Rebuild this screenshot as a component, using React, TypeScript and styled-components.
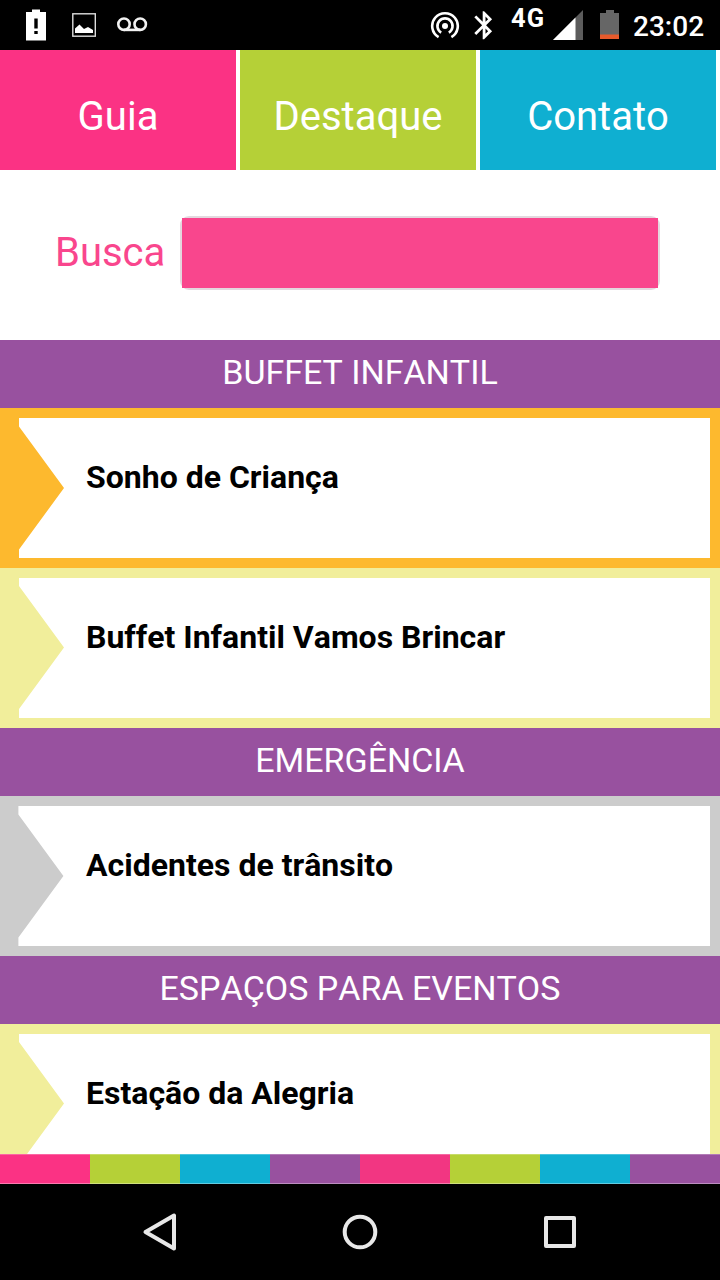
import React from "react";
import styled, { createGlobalStyle } from "styled-components";

const GlobalStyle = createGlobalStyle`
  * { box-sizing: border-box; }
  body {
    margin: 0;
    background: #fff;
    font-family: Roboto, "Liberation Sans", sans-serif;
    font-kerning: none;
  }
`;

const colors = {
  pink: "#fb3284",
  lime: "#b5d037",
  cyan: "#0fafd1",
  purple: "#98519f",
};

const Screen = styled.div`
  display: flex;
  flex-direction: column;
  width: 720px;
  height: 1280px;
  overflow: hidden;
  background: #fff;
`;

const StatusBar = styled.header`
  display: flex;
  justify-content: space-between;
  flex: none;
  height: 50px;
  padding: 0 15px 0 24px;
  background: #000;
  color: #fff;
`;

const StatusGroup = styled.div`
  display: flex;
  align-items: flex-start;
  height: 50px;
`;

const StatusIcon = styled.svg<{ $gap?: number }>`
  display: block;
  flex: none;
  margin-right: ${(p) => p.$gap ?? 0}px;
`;

const Network = styled.span`
  width: 38px;
  margin-top: 3px;
  font-size: 25.5px;
  font-weight: 700;
  line-height: 30px;
  letter-spacing: 1.2px;
`;

const Clock = styled.time`
  width: 72px;
  font-size: 28px;
  font-weight: 500;
  line-height: 53px;
  white-space: nowrap;
`;

const Tabs = styled.nav`
  display: grid;
  grid-template-columns: repeat(3, 236px);
  column-gap: 4px;
  flex: none;
  height: 120px;
`;

const Tab = styled.a<{ $color: string }>`
  display: flex;
  align-items: center;
  justify-content: center;
  padding-top: 12px;
  background: ${(p) => p.$color};
  color: #fff;
  font-size: 40px;
`;

const SearchRow = styled.label`
  display: flex;
  align-items: flex-start;
  flex: none;
  height: 170px;
  padding: 46px 60px 0 55px;
`;

const SearchLabel = styled.span`
  width: 125px;
  color: #f9468d;
  font-size: 40px;
  line-height: 74px;
`;

const SearchFrame = styled.span`
  flex: 1;
  height: 74px;
  padding: 2px;
  border-radius: 9px;
  background: #e3d8de;
`;

const SearchInput = styled.input`
  display: block;
  width: 100%;
  height: 70px;
  padding: 0 12px;
  border: 0;
  border-radius: 0;
  outline: 0;
  background: #f9468d;
  color: #fff;
  font: 32px Roboto, sans-serif;
`;

const Listing = styled.main`
  flex: none;
  height: 814px;
  overflow: hidden;
`;

const SectionTitle = styled.h2`
  height: 68px;
  margin: 0;
  background: ${colors.purple};
  color: #fff;
  font-size: 34px;
  font-weight: 400;
  line-height: 65px;
  text-align: center;
`;

const Entry = styled.article<{ $color: string }>`
  height: 160px;
  padding: 10px 10px 10px 18px;
  background: ${(p) => p.$color};
`;

const EntryCard = styled.div<{ $tip: number; $inset: number }>`
  height: 140px;
  padding: 40px 0 0 68px;
  background: #fff;
  clip-path: polygon(
    ${(p) => p.$inset}px 0, 100% 0, 100% 100%, ${(p) => p.$inset}px 100%,
    ${(p) => p.$inset}px ${(p) => p.$tip + 61.5}px,
    ${(p) => p.$inset + 45}px ${(p) => p.$tip}px,
    ${(p) => p.$inset}px ${(p) => p.$tip - 61.5}px
  );
`;

const EntryName = styled.h3`
  margin: 0;
  color: #000;
  font-size: 32px;
  font-weight: 700;
  line-height: 38px;
  white-space: nowrap;
`;

const Stripes = styled.div`
  display: grid;
  grid-template-columns: repeat(8, 90px);
  flex: none;
  height: 30px;
`;

const Stripe = styled.span<{ $color: string }>`
  background: ${(p) => p.$color};
  box-shadow: inset 0 1px rgba(255, 255, 255, 0.25), inset 0 -1px rgba(255, 255, 255, 0.35);
`;

const NavigationBar = styled.footer`
  display: flex;
  justify-content: center;
  align-items: center;
  gap: 152px;
  flex: none;
  height: 96px;
  background: #000;
`;

const NavButton = styled.button`
  width: 48px;
  height: 48px;
  padding: 0;
  border: 0;
  background: transparent;
`;

const NavGlyph = styled.svg`
  display: block;
  fill: none;
  stroke: #e8e8e8;
  stroke-width: 4;
  stroke-linejoin: round;
`;

const tabs = [
  { label: "Guia", color: colors.pink },
  { label: "Destaque", color: colors.lime },
  { label: "Contato", color: colors.cyan },
];

const sections = [
  {
    title: "BUFFET INFANTIL",
    entries: [
      { name: "Sonho de Criança", color: "#fdb92e", tip: 70, inset: 1 },
      { name: "Buffet Infantil Vamos Brincar", color: "#f1ee9b", tip: 69.5, inset: 1 },
    ],
  },
  {
    title: "EMERGÊNCIA",
    entries: [{ name: "Acidentes de trânsito", color: "#cccccc", tip: 70, inset: 0.4 }],
  },
  {
    title: "ESPAÇOS PARA EVENTOS",
    entries: [{ name: "Estação da Alegria", color: "#f1ee9b", tip: 69.5, inset: 1 }],
  },
];

const stripes = [
  colors.pink, colors.lime, colors.cyan, colors.purple,
  "#f23682", colors.lime, colors.cyan, colors.purple,
];

export default function App() {
  return (
    <Screen>
      <GlobalStyle />
      <StatusBar>
        <StatusGroup>
          <StatusIcon width="24" height="50" $gap={22}>
            <path d="M8 9.5h8V12h6v28.5H2V12h6z" fill="#fff" />
            <path d="M10.3 18.5h3.4v10h-3.4zM10.3 31h3.4v3h-3.4z" fill="#000" />
          </StatusIcon>
          <StatusIcon width="28" height="50" $gap={17}>
            <rect x="2.8" y="13.8" width="22.5" height="22.4" fill="none" stroke="#ddd" strokeWidth="1.4" />
            <path d="M5 33v-4.5l4.5-4 4.5 4.5 4-2 5 3V33z" fill="#fff" />
          </StatusIcon>
          <StatusIcon width="34" height="50" fill="none" stroke="#f2f2f2" strokeWidth="2.6">
            <circle cx="9" cy="24.2" r="5.7" />
            <circle cx="25.2" cy="24.2" r="5.7" />
            <path d="M9 29.9h16.2" />
          </StatusIcon>
        </StatusGroup>
        <StatusGroup>
          <StatusIcon width="30" height="50" $gap={7} fill="none" stroke="#fff" strokeWidth="2.6">
            <circle cx="15" cy="26" r="3" fill="#fff" stroke="none" />
            <path d="M11.2 32.6a7.6 7.6 0 1 1 7.6 0" />
            <path d="M8.6 37.1a12.8 12.8 0 1 1 12.8 0" />
          </StatusIcon>
          <StatusIcon width="34" height="50" $gap={10} fill="#fff">
            <path
              transform="translate(0.3 8.4) scale(1.4)"
              d="M17.71 7.71L12 2h-1v7.59L6.41 5 5 6.41 10.59 12 5 17.59 6.41 19 11 14.41V22h1l5.71-5.71-4.3-4.29 4.3-4.29zM13 5.83l1.88 1.88L13 9.59V5.83zm1.88 10.46L13 18.17v-3.76l1.88 1.88z"
            />
          </StatusIcon>
          <Network>4G</Network>
          <StatusIcon width="34" height="50" $gap={17}>
            <path d="M4 40L34 10v30z" fill="#5c5c5c" />
            <path d="M4 40L26.5 17.5V40z" fill="#fff" />
          </StatusIcon>
          <StatusIcon width="20" height="50" $gap={13}>
            <path d="M6 10h8v3h5v22H0V13h6z" fill="#666" />
            <path d="M0 34.5h19V39H0z" fill="#e65a2c" />
          </StatusIcon>
          <Clock>23:02</Clock>
        </StatusGroup>
      </StatusBar>
      <Tabs>
        {tabs.map((tab) => (
          <Tab key={tab.label} $color={tab.color}>{tab.label}</Tab>
        ))}
      </Tabs>
      <SearchRow>
        <SearchLabel>Busca</SearchLabel>
        <SearchFrame>
          <SearchInput type="text" />
        </SearchFrame>
      </SearchRow>
      <Listing>
        {sections.map((section) => (
          <section key={section.title}>
            <SectionTitle>{section.title}</SectionTitle>
            {section.entries.map((entry) => (
              <Entry key={entry.name} $color={entry.color}>
                <EntryCard $tip={entry.tip} $inset={entry.inset}>
                  <EntryName>{entry.name}</EntryName>
                </EntryCard>
              </Entry>
            ))}
          </section>
        ))}
      </Listing>
      <Stripes>
        {stripes.map((color, index) => (
          <Stripe key={index} $color={color} />
        ))}
      </Stripes>
      <NavigationBar>
        <NavButton aria-label="Voltar">
          <NavGlyph width="48" height="48">
            <path d="M9.5 24L38 7.5v33z" />
          </NavGlyph>
        </NavButton>
        <NavButton aria-label="Início">
          <NavGlyph width="48" height="48">
            <circle cx="24" cy="24" r="15.3" />
          </NavGlyph>
        </NavButton>
        <NavButton aria-label="Recentes">
          <NavGlyph width="48" height="48">
            <rect x="10" y="10" width="28" height="28" />
          </NavGlyph>
        </NavButton>
      </NavigationBar>
    </Screen>
  );
}
